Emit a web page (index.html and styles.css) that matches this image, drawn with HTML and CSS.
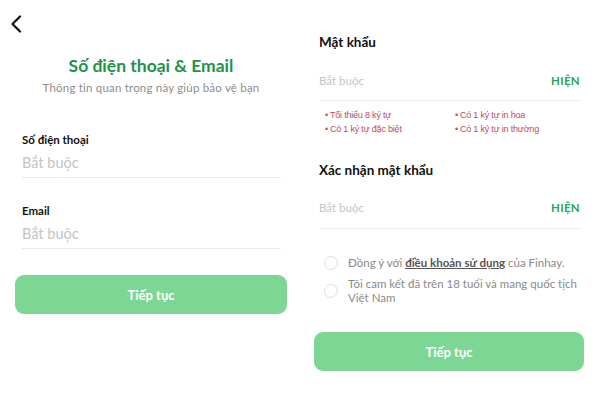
FILE: index.html
```html
<!DOCTYPE html>
<html lang="vi">
<head>
<meta charset="utf-8">
<link rel="stylesheet" href="styles.css">
</head>
<body>
<div class="page">
  <section class="pane left">
    <div class="back">
      <svg width="12" height="18" viewBox="0 0 12 18"><path d="M10 1.5 L2.5 9 L10 16.5" fill="none" stroke="#111" stroke-width="2.2" stroke-linecap="round" stroke-linejoin="round"/></svg>
    </div>
    <h1 class="title">Số điện thoại &amp; Email</h1>
    <p class="subtitle">Thông tin quan trọng này giúp bảo vệ bạn</p>
    <div class="field first">
      <div class="label">Số điện thoại</div>
      <div class="input big">Bắt buộc</div>
    </div>
    <div class="field second">
      <div class="label">Email</div>
      <div class="input big">Bắt buộc</div>
    </div>
    <button class="btn btn-left">Tiếp tục</button>
  </section>
  <section class="pane right">
    <div class="rlabel">Mật khẩu</div>
    <div class="input small row"><span>Bắt buộc</span><span class="show">HIỆN</span></div>
    <ul class="rules">
      <li>Tối thiểu 8 ký tự</li>
      <li>Có 1 ký tự in hoa</li>
      <li>Có 1 ký tự đặc biệt</li>
      <li>Có 1 ký tự in thường</li>
    </ul>
    <div class="rlabel confirm">Xác nhận mật khẩu</div>
    <div class="input small row second-input"><span>Bắt buộc</span><span class="show">HIỆN</span></div>
    <div class="checks">
      <div class="check"><span class="circle"></span><span class="ctext">Đồng ý với <b class="link">điều khoản sử dụng</b> của Finhay.</span></div>
      <div class="check"><span class="circle"></span><span class="ctext">Tôi cam kết đã trên 18 tuổi và mang quốc tịch Việt Nam</span></div>
    </div>
    <button class="btn btn-right">Tiếp tục</button>
  </section>
</div>
</body>
</html>
```
FILE: styles.css
```css
* { box-sizing: border-box; }
html, body { margin: 0; padding: 0; background: #fff; }
body { font-family: "Lato", "Noto Sans", sans-serif; color: #111; }
.page { display: flex; width: 600px; height: 404px; }
.pane { width: 300px; display: flex; flex-direction: column; }
.left { padding: 15px 13px 0 15px; }
.right { padding: 33px 19px 0 19px; }
.back { height: 18px; margin-left: -5px; display: flex; }
.title { margin: 22px 0 0; text-align: center; font-size: 17.5px; font-weight: 700; color: #1e9448; line-height: 22px; }
.subtitle { margin: 3px 0 0; text-align: center; font-size: 11.5px; color: #8c8c8c; line-height: 16px; letter-spacing: 0.2px; }
.field { margin-left: 7px; margin-right: 6px; border-bottom: 1px solid #e9e9e9; }
.first { margin-top: 37px; }
.second { margin-top: 26px; }
.label { font-size: 11.5px; font-weight: 700; line-height: 14px; color: #111; }
.input { color: #c4c4c4; }
.big { font-size: 14.5px; line-height: 18px; margin-top: 7px; padding-bottom: 5px; }
.btn { border: none; background: #7dd794; color: #fff; font-family: inherit; font-weight: 700; font-size: 13px; border-radius: 9px; height: 39px; }
.btn-left { margin-top: 26px; width: 272px; }
.rlabel { font-size: 13.5px; font-weight: 700; line-height: 18px; color: #111; }
.small { font-size: 11.5px; line-height: 14px; margin-top: 23px; padding-bottom: 12px; border-bottom: 1px solid #ececec; }
.second-input { margin-top: 22px; padding-bottom: 13px; }
.row { display: flex; justify-content: space-between; }
.show { color: #29a55a; font-weight: 700; font-size: 11.5px; letter-spacing: 0.3px; padding-right: 1px; }
.rules { list-style: none; margin: 8px 0 0; padding: 0 0 0 6px; display: grid; grid-template-columns: 130px 1fr; row-gap: 1px; }
.rules li { font-family: "Liberation Sans", sans-serif; font-size: 9px; line-height: 13px; color: #c04a5e; letter-spacing: -0.2px; }
.rules li::before { content: "•"; margin-right: 2px; }
.confirm { margin-top: 25px; }
.checks { margin-top: 27px; display: flex; flex-direction: column; gap: 7px; padding-left: 5px; }
.check { display: flex; align-items: center; gap: 10px; }
.circle { width: 14px; height: 14px; border: 1px solid #dedede; border-radius: 50%; flex: none; }
.ctext { font-size: 11.5px; line-height: 14px; color: #8a8a8a; }
.link { color: #555; text-decoration: underline; font-weight: 700; }
.btn-right { margin-top: 27px; margin-left: -5px; width: 270px; }
```
